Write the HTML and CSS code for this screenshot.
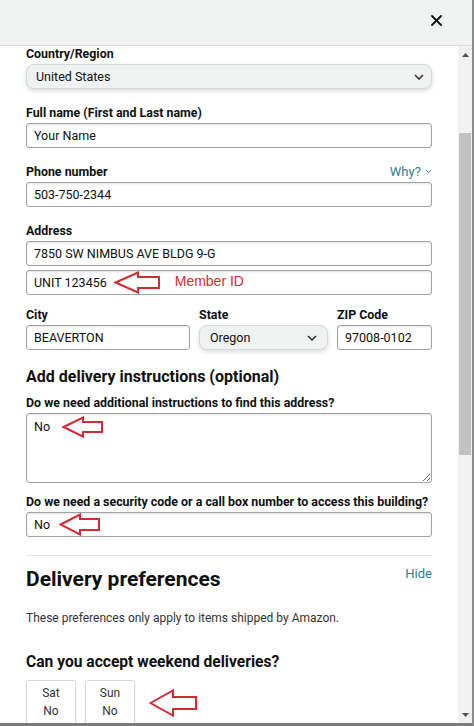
FILE: index.html
```html
<!DOCTYPE html>
<html lang="en">
<head>
<meta charset="utf-8">
<title>Edit address</title>
<link rel="stylesheet" href="styles.css">
</head>
<body>
<div class="window">
  <header class="top">
    <button class="close" aria-label="Close">
      <svg width="11" height="11" viewBox="0 0 11 11"><path d="M1 1 L10 10 M10 1 L1 10" stroke="#0f1111" stroke-width="1.8" stroke-linecap="round" fill="none"/></svg>
    </button>
  </header>
  <div class="main">
    <div class="content">
      <div class="group first">
        <div class="label">Country/Region</div>
        <div class="select wide"><span>United States</span><svg class="chev" width="10" height="6" viewBox="0 0 10 6"><path d="M1 1 L5 5 L9 1" stroke="#333" stroke-width="1.6" fill="none"/></svg></div>
      </div>
      <div class="group">
        <div class="label">Full name (First and Last name)</div>
        <div class="input">Your Name</div>
      </div>
      <div class="group">
        <div class="label-row"><span class="label">Phone number</span><span class="link why">Why? <svg width="7" height="5" viewBox="0 0 7 5"><path d="M1 1 L3.5 3.5 L6 1" stroke="#4a8a94" stroke-width="1" fill="none"/></svg></span></div>
        <div class="input">503-750-2344</div>
      </div>
      <div class="group">
        <div class="label">Address</div>
        <div class="input">7850 SW NIMBUS AVE BLDG 9-G</div>
        <div class="input second">UNIT 123456
          <svg class="arrow a1" width="47" height="23" viewBox="0 0 47 23"><path d="M1.5 11.5 L24 1.5 L24 6 L45 6 L45 17 L24 17 L24 21.5 Z" fill="none" stroke="#d42a33" stroke-width="2" stroke-linejoin="miter"/></svg>
          <span class="note">Member ID</span>
        </div>
      </div>
      <div class="group row">
        <div class="col city">
          <div class="label">City</div>
          <div class="input">BEAVERTON</div>
        </div>
        <div class="col state">
          <div class="label">State</div>
          <div class="select"><span>Oregon</span><svg class="chev" width="10" height="6" viewBox="0 0 10 6"><path d="M1 1 L5 5 L9 1" stroke="#333" stroke-width="1.6" fill="none"/></svg></div>
        </div>
        <div class="col zip">
          <div class="label">ZIP Code</div>
          <div class="input">97008-0102</div>
        </div>
      </div>
      <h3 class="subhead">Add delivery instructions (optional)</h3>
      <div class="group q1">
        <div class="label">Do we need additional instructions to find this address?</div>
        <div class="textarea">No
          <svg class="arrow a2" width="42" height="22" viewBox="0 0 42 22"><path d="M1.5 11 L21 1.5 L21 6 L40 6 L40 16 L21 16 L21 20.5 Z" fill="none" stroke="#d42a33" stroke-width="2"/></svg>
        </div>
      </div>
      <div class="group q2">
        <div class="label">Do we need a security code or a call box number to access this building?</div>
        <div class="input">No
          <svg class="arrow a3" width="42" height="23" viewBox="0 0 42 23"><path d="M1.5 11.5 L21 1.5 L21 6 L40 6 L40 17 L21 17 L21 21.5 Z" fill="none" stroke="#d42a33" stroke-width="2"/></svg>
        </div>
      </div>
      <hr class="divider">
      <div class="pref-head">
        <h2>Delivery preferences</h2>
        <span class="link hide">Hide</span>
      </div>
      <p class="pref-note">These preferences only apply to items shipped by Amazon.</p>
      <h3 class="weekend">Can you accept weekend deliveries?</h3>
      <div class="days">
        <div class="day"><span>Sat</span><span>No</span></div>
        <div class="day"><span>Sun</span><span>No</span></div>
        <svg class="arrow a4" width="49" height="28" viewBox="0 0 49 28"><path d="M1.5 14 L24 1.5 L24 8 L47 8 L47 20 L24 20 L24 26.5 Z" fill="none" stroke="#d42a33" stroke-width="2"/></svg>
      </div>
    </div>
    <div class="scrollbar" aria-hidden="true">
      <div class="sb-btn"><svg width="7" height="4" viewBox="0 0 7 4"><path d="M0 4 L3.5 0 L7 4 Z" fill="#505050"/></svg></div>
      <div class="track"><div class="thumb"></div></div>
      <div class="sb-btn"><svg width="7" height="4" viewBox="0 0 7 4"><path d="M0 0 L3.5 4 L7 0 Z" fill="#505050"/></svg></div>
    </div>
  </div>
</div>
</body>
</html>
```
FILE: styles.css
```css
* { box-sizing: border-box; margin: 0; padding: 0; }
html, body { width: 474px; height: 726px; overflow: hidden; background: #fff; }
body {
  font-family: Roboto, "Liberation Sans", Arial, sans-serif;
  color: #0f1111;
}
.window {
  width: 474px;
  height: 726px;
  display: flex;
  flex-direction: column;
  border-right: 2px solid #8c8c8c;
  border-bottom: 3px solid #7b7b7b;
}
.top {
  height: 46px;
  flex: none;
  background: #f0f2f2;
  border-bottom: 1px solid #dcdede;
  display: flex;
  justify-content: flex-end;
  align-items: flex-start;
  padding: 15px 30px 0 0;
}
.close {
  border: 0;
  background: none;
  width: 11px;
  height: 11px;
  display: flex;
}
.main {
  flex: 1;
  display: flex;
  min-height: 0;
}
.content {
  flex: 1;
  padding: 0 26px;
  overflow: hidden;
}
.scrollbar {
  width: 14px;
  flex: none;
  background: #f1f1f1;
  display: flex;
  flex-direction: column;
}
.sb-btn {
  height: 17px;
  display: flex;
  align-items: center;
  justify-content: center;
}
.track { flex: 1; padding: 0 1px; }
.thumb {
  margin-top: 70px;
  height: 322px;
  background: #c1c1c1;
}

.group { margin-top: 16px; }
.group.first { margin-top: 0; }
.label {
  display: block;
  font-size: 12.4px;
  font-weight: 700;
  line-height: 16px;
  margin-bottom: 2px;
}
.label-row {
  display: flex;
  justify-content: space-between;
  align-items: baseline;
}
.link {
  color: #2d7f8b;
  font-size: 13px;
  line-height: 16px;
}
.why svg { margin-left: 1px; vertical-align: 2px; }

.input, .textarea {
  height: 25px;
  border: 1px solid #a0a4a4;
  border-radius: 3px;
  box-shadow: inset 0 1px 2px rgba(15,17,17,.12);
  background: #fff;
  font-size: 12.5px;
  line-height: 23px;
  padding: 0 7px;
  display: flex;
  align-items: center;
  white-space: nowrap;
}
.input.second { margin-top: 4px; }
.select {
  height: 25px;
  border: 1px solid #d5d9d9;
  border-radius: 8px;
  background: #f0f2f2;
  box-shadow: 0 2px 4px rgba(15,17,17,.15);
  font-size: 12.5px;
  padding: 0 7px 0 9px;
  display: flex;
  align-items: center;
  justify-content: space-between;
}
.arrow { flex: none; }
.a1 { margin-left: 7px; }
.note {
  font-family: "Liberation Sans", Arial, sans-serif;
  color: #d42a33;
  font-size: 14px;
  margin-left: 14px;
  margin-top: -2px;
}

.row {
  display: flex;
  gap: 9px;
  margin-top: 12px;
}
.city { width: 164px; }
.state { width: 129px; }
.zip { flex: 1; }
.state .select { padding-left: 10px; padding-right: 10px; }

.subhead {
  font-size: 16px;
  line-height: 20px;
  font-weight: 700;
  margin-top: 17px;
}
.q1 { margin-top: 8px; }
.textarea {
  height: 70px;
  align-items: flex-start;
  padding-top: 1px;
  resize: both;
  overflow: hidden;
}
.a2 { margin-left: 12px; margin-top: 1px; }
.q2 { margin-top: 11px; }
.a3 { margin-left: 9px; margin-top: 0; }

.divider {
  border: 0;
  border-top: 1px solid #e3e6e6;
  margin-top: 18px;
}
.pref-head {
  display: flex;
  justify-content: space-between;
  align-items: flex-start;
  margin-top: 9px;
}
.pref-head h2 {
  font-size: 21px;
  line-height: 28px;
  font-weight: 700;
}
.hide { margin-top: 1px; }
.pref-note {
  font-size: 12px;
  line-height: 18px;
  margin-top: 16px;
  color: #333;
}
.weekend {
  font-size: 15.6px;
  line-height: 24px;
  font-weight: 700;
  margin-top: 23px;
}
.days {
  display: flex;
  gap: 9px;
  margin-top: 6px;
  align-items: flex-start;
}
.day {
  width: 50px;
  height: 50px;
  border: 1px solid #d5d9d9;
  border-radius: 3px;
  box-shadow: 0 1px 2px rgba(15,17,17,.12);
  display: flex;
  flex-direction: column;
  align-items: center;
  padding-top: 3px;
  font-size: 12px;
  line-height: 18px;
  color: #333;
}
.a4 { margin-left: 5px; margin-top: 9px; }
```
